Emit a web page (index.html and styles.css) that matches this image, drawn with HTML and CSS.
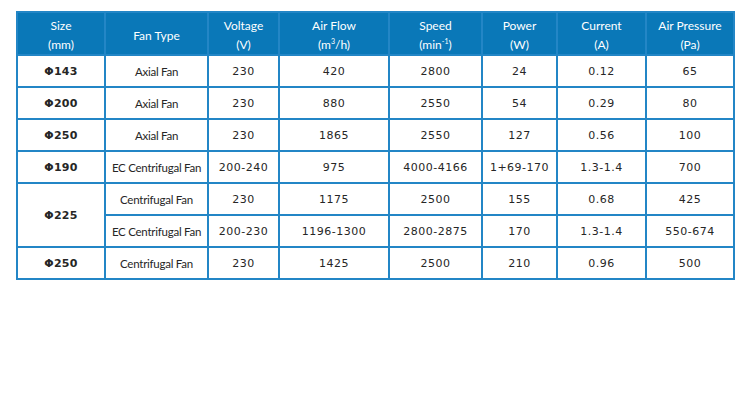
FILE: index.html
```html
<!DOCTYPE html>
<html>
<head>
<meta charset="utf-8">
<link rel="stylesheet" href="styles.css">
</head>
<body>
<table class="spec">
  <colgroup>
    <col class="c1"><col class="c2"><col class="c3"><col class="c4"><col class="c5"><col class="c6"><col class="c7"><col class="c8">
  </colgroup>
  <thead>
    <tr>
      <th>Size<br>(mm)</th>
      <th>Fan Type</th>
      <th>Voltage<br>(V)</th>
      <th>Air Flow<br>(m<sup>3</sup>/h)</th>
      <th>Speed<br>(min<sup>-1</sup>)</th>
      <th>Power<br>(W)</th>
      <th>Current<br>(A)</th>
      <th>Air Pressure<br>(Pa)</th>
    </tr>
  </thead>
  <tbody>
    <tr><td class="size">Φ143</td><td class="type">Axial Fan</td><td>230</td><td>420</td><td>2800</td><td>24</td><td>0.12</td><td>65</td></tr>
    <tr><td class="size">Φ200</td><td class="type">Axial Fan</td><td>230</td><td>880</td><td>2550</td><td>54</td><td>0.29</td><td>80</td></tr>
    <tr><td class="size">Φ250</td><td class="type">Axial Fan</td><td>230</td><td>1865</td><td>2550</td><td>127</td><td>0.56</td><td>100</td></tr>
    <tr><td class="size">Φ190</td><td class="type">EC Centrifugal Fan</td><td>200-240</td><td>975</td><td>4000-4166</td><td>1+69-170</td><td>1.3-1.4</td><td>700</td></tr>
    <tr><td class="size" rowspan="2">Φ225</td><td class="type">Centrifugal Fan</td><td>230</td><td>1175</td><td>2500</td><td>155</td><td>0.68</td><td>425</td></tr>
    <tr><td class="type">EC Centrifugal Fan</td><td>200-230</td><td>1196-1300</td><td>2800-2875</td><td>170</td><td>1.3-1.4</td><td>550-674</td></tr>
    <tr><td class="size">Φ250</td><td class="type">Centrifugal Fan</td><td>230</td><td>1425</td><td>2500</td><td>210</td><td>0.96</td><td>500</td></tr>
  </tbody>
</table>
</body>
</html>
```

FILE: styles.css
```css
html, body {
  margin: 0;
  padding: 0;
  background: #ffffff;
}
.spec {
  margin: 11px 0 0 16px;
  border-collapse: collapse;
  table-layout: fixed;
  width: 717px;
}
.c1 { width: 88px; }
.c2 { width: 103px; }
.c3 { width: 71px; }
.c4 { width: 110px; }
.c5 { width: 93px; }
.c6 { width: 75px; }
.c7 { width: 89px; }
.c8 { width: 88px; }
.spec th, .spec td {
  border: 2px solid #2386c6;
  text-align: center;
  vertical-align: middle;
  padding: 0;
}
.spec th {
  background: #0a78b8;
  color: #ffffff;
  font-family: Lato, "Open Sans", sans-serif;
  font-weight: 400;
  font-size: 12px;
  line-height: 19px;
  height: 36px;
  padding-top: 3px;
}
.spec th sup {
  font-size: 7px;
  line-height: 0;
  vertical-align: 5px;
}
.spec td {
  height: 29px;
  color: #262626;
  font-family: "DejaVu Sans", Verdana, sans-serif;
  font-size: 11px;
  letter-spacing: 0.5px;
  padding-top: 1px;
}
.spec td.type {
  font-family: Lato, "Open Sans", sans-serif;
  font-size: 11.5px;
  letter-spacing: -0.25px;
}
.spec td.size {
  font-weight: 700;
  letter-spacing: 0.3px;
}
```
